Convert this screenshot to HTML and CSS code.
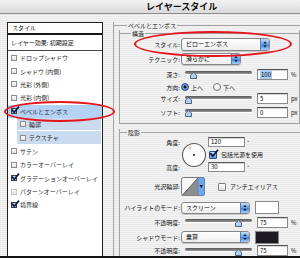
FILE: index.html
```html
<!DOCTYPE html>
<html lang="ja">
<head>
<meta charset="utf-8">
<title>レイヤースタイル</title>
<link rel="stylesheet" href="styles.css">
</head>
<body>
<div class="win">
  <div class="titlebar"><span class="title">レイヤースタイル</span></div>
  <div class="main">
    <div class="list">
      <div class="list-head">スタイル</div>
      <div class="list-preset">レイヤー効果: 初期設定</div>
      <ul class="fx">
        <li class="fx-item"><span class="cb"></span>ドロップシャドウ</li>
        <li class="fx-item"><span class="cb"></span>シャドウ (内側)</li>
        <li class="fx-item"><span class="cb"></span>光彩 (外側)</li>
        <li class="fx-item"><span class="cb"></span>光彩 (内側)</li>
        <li class="fx-item is-active"><span class="cb is-on"><svg class="tick" width="9" height="9" viewBox="0 0 9 9"><path d="M1 3.6 L3.2 6.2 L8 0.6" fill="none" stroke="#0d1a42" stroke-width="1.7"/></svg></span>ベベルとエンボス</li>
        <li class="fx-item is-sub"><span class="cb"></span>輪郭</li>
        <li class="fx-item is-sub"><span class="cb"></span>テクスチャ</li>
        <li class="fx-item"><span class="cb"></span>サテン</li>
        <li class="fx-item"><span class="cb"></span>カラーオーバーレイ</li>
        <li class="fx-item"><span class="cb is-on"><svg class="tick" width="9" height="9" viewBox="0 0 9 9"><path d="M1 3.6 L3.2 6.2 L8 0.6" fill="none" stroke="#0d1a42" stroke-width="1.7"/></svg></span>グラデーションオーバーレイ</li>
        <li class="fx-item"><span class="cb is-dim"></span>パターンオーバーレイ</li>
        <li class="fx-item"><span class="cb is-on"><svg class="tick" width="9" height="9" viewBox="0 0 9 9"><path d="M1 3.6 L3.2 6.2 L8 0.6" fill="none" stroke="#0d1a42" stroke-width="1.7"/></svg></span>境界線</li>
      </ul>
    </div>

    <div class="panel">
      <div class="outer">
        <div class="ghead ghead-outer"><span class="glabel">ベベルとエンボス</span></div>

        <div class="group group-struct">
          <div class="ghead ghead-struct"><span class="glabel">構造</span></div>

          <div class="row r1">
            <span class="lbl">スタイル:</span>
            <div class="popup w-style"><span class="ptext">ピローエンボス</span><span class="stepper"><svg width="9" height="11" viewBox="0 0 9 11"><path d="M2.5 4.5 L4.5 2 L6.5 4.5Z M2.5 6.5 L4.5 9 L6.5 6.5Z" fill="#111"/></svg></span></div>
          </div>

          <div class="row r2">
            <span class="lbl">テクニック:</span>
            <div class="popup w-tech"><span class="ptext">滑らかに</span><span class="stepper"><svg width="9" height="10" viewBox="0 0 9 10"><path d="M2.5 4 L4.5 1.6 L6.5 4Z M2.5 6 L4.5 8.4 L6.5 6Z" fill="#111"/></svg></span></div>
          </div>

          <div class="row r3">
            <span class="lbl">深さ:</span>
            <div class="slider"><span class="track"></span><svg class="thumb" style="left:5px" width="7" height="7" viewBox="0 0 7 7"><path d="M3.5 0.5 L6.5 3 L6.5 6.5 L0.5 6.5 L0.5 3Z" fill="#b4cff0" stroke="#4f637f" stroke-width="1"/></svg></div>
            <span class="num"><span class="sel">100</span></span>
            <span class="unit">%</span>
          </div>

          <div class="row r4">
            <span class="lbl">方向:</span>
            <span class="radio is-on"></span><span class="rtext">上へ</span>
            <span class="radio radio-b"></span><span class="rtext">下へ</span>
          </div>

          <div class="row r5">
            <span class="lbl">サイズ:</span>
            <div class="slider"><span class="track"></span><svg class="thumb" style="left:0px" width="7" height="7" viewBox="0 0 7 7"><path d="M3.5 0.5 L6.5 3 L6.5 6.5 L0.5 6.5 L0.5 3Z" fill="#b4cff0" stroke="#4f637f" stroke-width="1"/></svg></div>
            <span class="num">5</span>
            <span class="unit">px</span>
          </div>

          <div class="row r6">
            <span class="lbl">ソフト:</span>
            <div class="slider"><span class="track"></span><svg class="thumb" style="left:0px" width="7" height="7" viewBox="0 0 7 7"><path d="M3.5 0.5 L6.5 3 L6.5 6.5 L0.5 6.5 L0.5 3Z" fill="#b4cff0" stroke="#4f637f" stroke-width="1"/></svg></div>
            <span class="num">0</span>
            <span class="unit">px</span>
          </div>
        </div>

        <div class="group group-shade">
          <div class="ghead ghead-shade"><span class="glabel">陰影</span></div>

          <div class="angle">
            <span class="lbl a-l1">角度:</span>
            <svg class="dial" width="26" height="26" viewBox="0 0 26 26">
              <circle cx="13" cy="13" r="11.5" fill="#fdfdfd" stroke="#5c5c5c" stroke-width="1.1"/>
              <path d="M9 4.5 V7.5 M7.5 6 H10.5" stroke="#b5b5b5" stroke-width="0.8"/>
              <circle cx="13" cy="13" r="1" fill="#222"/>
            </svg>
            <div class="a-v1"><span class="num num-angle">120</span><span class="unit deg">°</span></div>
            <div class="a-v2"><span class="cb2 is-on"><svg class="tick2" width="10" height="10" viewBox="0 0 10 10"><path d="M1.2 4.2 L3.8 7.2 L9 0.8" fill="none" stroke="#0d1a42" stroke-width="1.8"/></svg></span><span class="ctext">包括光源を使用</span></div>
            <span class="lbl a-l3">高度:</span>
            <div class="a-v3"><span class="num num-angle">30</span><span class="unit deg">°</span></div>
          </div>

          <div class="row r-contour">
            <span class="lbl">光沢輪郭:</span>
            <svg class="contour" width="25" height="20" viewBox="0 0 25 20">
              <rect x="0.5" y="0.5" width="23" height="18" rx="2" fill="#f6f6f6" stroke="#7a7a7a"/>
              <path d="M1 18.5 L17 1 L17 18.5Z" fill="#8e8e8e"/>
              <path d="M1 18.5 L17 1" stroke="#444" stroke-width="0.8"/>
              <rect x="17" y="0.5" width="6.5" height="18" rx="1.5" fill="#6fa5ea" stroke="#5a78a5" stroke-width="0.6"/>
              <path d="M18.5 8 L22 8 L20.25 11Z" fill="#111"/>
            </svg>
            <span class="cb2 cb2-anti"></span><span class="ctext">アンチエイリアス</span>
          </div>

          <div class="row r-hmode">
            <span class="lbl">ハイライトのモード:</span>
            <div class="popup w-mode"><span class="ptext">スクリーン</span><span class="stepper"><svg width="9" height="10" viewBox="0 0 9 10"><path d="M2.5 4 L4.5 1.6 L6.5 4Z M2.5 6 L4.5 8.4 L6.5 6Z" fill="#111"/></svg></span></div>
            <span class="swatch swatch-white"></span>
          </div>

          <div class="row r-hop">
            <span class="lbl">不透明度:</span>
            <div class="slider"><span class="track"></span><svg class="thumb" style="left:50px" width="7" height="7" viewBox="0 0 7 7"><path d="M3.5 0.5 L6.5 3 L6.5 6.5 L0.5 6.5 L0.5 3Z" fill="#b4cff0" stroke="#4f637f" stroke-width="1"/></svg></div>
            <span class="num">75</span>
            <span class="unit">%</span>
          </div>

          <div class="row r-smode">
            <span class="lbl">シャドウモード:</span>
            <div class="popup w-mode"><span class="ptext">乗算</span><span class="stepper"><svg width="9" height="10" viewBox="0 0 9 10"><path d="M2.5 4 L4.5 1.6 L6.5 4Z M2.5 6 L4.5 8.4 L6.5 6Z" fill="#111"/></svg></span></div>
            <span class="swatch swatch-dark"></span>
          </div>

          <div class="row r-sop">
            <span class="lbl">不透明度:</span>
            <div class="slider"><span class="track"></span><svg class="thumb" style="left:50px" width="7" height="7" viewBox="0 0 7 7"><path d="M3.5 0.5 L6.5 3 L6.5 6.5 L0.5 6.5 L0.5 3Z" fill="#b4cff0" stroke="#4f637f" stroke-width="1"/></svg></div>
            <span class="num">75</span>
            <span class="unit">%</span>
          </div>
        </div>
      </div>
    </div>
  </div>

  <span class="ring ring-left"></span>
  <span class="ring ring-right"></span>
</div>
</body>
</html>
```

FILE: styles.css
```css
* { box-sizing: border-box; margin: 0; padding: 0; }
html, body { width: 300px; height: 258px; overflow: hidden; }
body {
  font-family: "Noto Sans CJK JP", "Noto Sans", sans-serif;
  font-size: 6px;
  color: #111;
  background: #ececec;
}

.win {
  position: relative;
  height: 258px;
  border-bottom: 2px solid #141414;
  background: repeating-linear-gradient(#ebebeb 0 1px, #f2f2f2 1px 2px);
  overflow: hidden;
}

.titlebar {
  display: flex;
  height: 14px;
  border-bottom: 1px solid #8c8c8c;
  background: linear-gradient(#f2f2f2, #dadada);
  padding-left: 146px;
}
.title {
  font-size: 9px;
  font-weight: bold;
  line-height: 13px;
  color: #111;
  white-space: nowrap;
}

.main {
  display: flex;
  height: 242px;
  padding: 8px 0 0 7px;
}

/* ---------- left list ---------- */
.list {
  width: 96px;
  flex: none;
  height: 234px;
  border: 1px solid #1e1e1e;
  border-bottom: 0;
  background: #fff;
}
.list-head {
  height: 12px;
  line-height: 10px;
  padding-left: 4px;
  border-bottom: 2px solid #151515;
  color: #111;
}
.list-preset {
  height: 16px;
  line-height: 15px;
  padding-left: 3px;
  border-bottom: 1px solid #444;
  color: #111;
}
.fx { list-style: none; }
.fx-item {
  display: flex;
  align-items: center;
  gap: 3px;
  height: 13.4px;
  padding-left: 3px;
  color: #1e1e1e;
  white-space: nowrap;
}
.fx-item.is-active { background: #b3d2f6; }
.fx-item.is-sub {
  margin: 0 1px 0 9px;
  padding-left: 3px;
  background: #cbdbef;
  border-bottom: 1px solid #fff;
}

.cb {
  position: relative;
  flex: none;
  width: 6px;
  height: 6px;
  border: 1px solid #8d8d8d;
  background: linear-gradient(#fff, #e2e2e2);
}
.cb.is-on { border-color: #3d3d3d; background: linear-gradient(#dfe9f7, #9fbbe2); }
.cb.is-dim { border-color: #c2c2c2; }
.tick { position: absolute; left: -1px; top: -3px; }

/* ---------- right panel ---------- */
.panel {
  flex: none;
  width: 187px;
  margin-left: 10px;
}
.outer {
  height: 100%;
  border-left: 1px solid #a3a3a3;
}

.ghead {
  display: flex;
  height: 8px;
}
.ghead::before, .ghead::after {
  content: "";
  height: 0;
  margin-top: 3px;
  border-top: 1px solid #a3a3a3;
}
.ghead::after { flex: 1; }
.glabel {
  line-height: 7px;
  padding: 0 1px;
  color: #111;
}
.ghead-outer { margin-left: -1px; }
.ghead-outer::before { width: 14px; }
.ghead-struct, .ghead-shade { margin-left: -1px; height: 7px; }
.ghead-struct::before { width: 12px; }
.ghead-shade::before { width: 8px; }

.group {
  width: 181px;
  margin-left: 5px;
  border-left: 1px solid #a3a3a3;
  border-right: 1px solid #a3a3a3;
}
.group-struct {
  border-bottom: 1px solid #a3a3a3;
  padding-bottom: 3px;
}
.group-shade {
  margin-top: 5px;
  border-right: 0;
}

.row {
  display: flex;
  align-items: center;
  white-space: nowrap;
}
.r1 { height: 14px; }
.r2 { height: 16px; }
.r3 { height: 14px; }
.r4 { height: 12px; }
.r5 { height: 11px; }
.r6 { height: 16px; }

.lbl {
  flex: none;
  width: 61px;
  text-align: right;
  padding-right: 1px;
  color: #111;
}

/* popups */
.popup {
  display: flex;
  align-items: stretch;
  height: 12px;
  border: 1px solid #858585;
  border-radius: 3px;
  background: linear-gradient(#ffffff, #eeeeee);
  box-shadow: 0 1px 0 #c9c9c9;
  overflow: hidden;
}
.ptext {
  flex: 1;
  padding-left: 4px;
  line-height: 10px;
  color: #000;
}
.stepper {
  flex: none;
  width: 9px;
  display: flex;
  align-items: center;
  border-left: 1px solid #5b7fb4;
  background: linear-gradient(#c4ddfa, #6ea6eb 45%, #3f86e2 55%, #a6d0f7);
}
.w-style { width: 89px; height: 13px; }
.w-tech { width: 60px; }
.w-mode { width: 69px; }

/* sliders */
.slider {
  position: relative;
  flex: none;
  width: 67px;
  height: 10px;
  margin-left: 4px;
}
.track {
  position: absolute;
  left: 0; right: 0;
  top: 2px;
  height: 3px;
  border-radius: 2px;
  background: linear-gradient(#555, #9a9a9a);
  box-shadow: 0 1px 0 #fff;
}
.thumb { position: absolute; top: 3px; }

/* numeric fields */
.num {
  flex: none;
  width: 31px;
  height: 11px;
  margin-left: 5px;
  padding-left: 2px;
  line-height: 9px;
  border: 1px solid #8a8a8a;
  border-top-color: #555;
  background: #fff;
  box-shadow: inset 0 1px 0 #d5d5d5;
  color: #000;
}
.sel { background: #a9ccf4; padding: 0 1px; }
.unit { margin-left: 3px; color: #111; }
.deg { margin-left: 2px; }

/* radios */
.radio {
  flex: none;
  width: 8px;
  height: 8px;
  border-radius: 50%;
  border: 1px solid #7a7a7a;
  background: radial-gradient(circle at 50% 35%, #fff, #dedede);
}
.radio.is-on {
  border-color: #2e4c7c;
  background: radial-gradient(circle, #111 0 1.3px, #7aaef0 1.8px, #3c7dd8);
}
.radio-b { margin-left: 10px; }
.rtext { margin-left: 2px; }

/* angle block */
.angle {
  display: grid;
  grid-template-columns: 61px 27px auto;
  grid-template-rows: 12px 13px 12px;
  align-items: center;
}
.a-l1 { grid-column: 1; grid-row: 1; }
.a-l3 { grid-column: 1; grid-row: 3; }
.dial { grid-column: 2; grid-row: 1 / 4; margin-top: 1px; }
.a-v1, .a-v2, .a-v3 { grid-column: 3; display: flex; align-items: center; }
.a-v1 { grid-row: 1; }
.a-v2 { grid-row: 2; }
.a-v3 { grid-row: 3; }
.num-angle { width: 37px; height: 10px; margin-left: 0; line-height: 8px; }

.cb2 {
  position: relative;
  flex: none;
  width: 8px;
  height: 8px;
  border: 1px solid #7f7f7f;
  border-radius: 1px;
  background: linear-gradient(#fff, #e0e0e0);
}
.cb2.is-on {
  margin-left: 1px;
  border-color: #2f4f80;
  background: linear-gradient(#cfe2fa, #5f9ae6);
}
.tick2 { position: absolute; left: -1px; top: -3px; }
.ctext { margin-left: 4px; color: #111; }

.r-contour { height: 27px; }
.contour { flex: none; }
.cb2-anti { margin-left: 12px; }

.r-hmode { height: 15px; }
.r-hop { height: 14px; }
.r-smode { height: 16px; }
.r-sop { height: 11px; }

.swatch {
  flex: none;
  width: 24px;
  height: 13px;
  margin-left: 5px;
  border: 1px solid #8a8a8a;
}
.swatch-white { background: #fff; }
.swatch-dark { background: #1d1b21; }

/* red annotation rings */
.ring {
  position: absolute;
  border: 2px solid #e3161c;
  border-radius: 50%;
  pointer-events: none;
}
.ring-left { left: 4px; top: 101px; width: 111px; height: 21px; }
.ring-right { left: 134px; top: 31px; width: 158px; height: 26px; }
```
